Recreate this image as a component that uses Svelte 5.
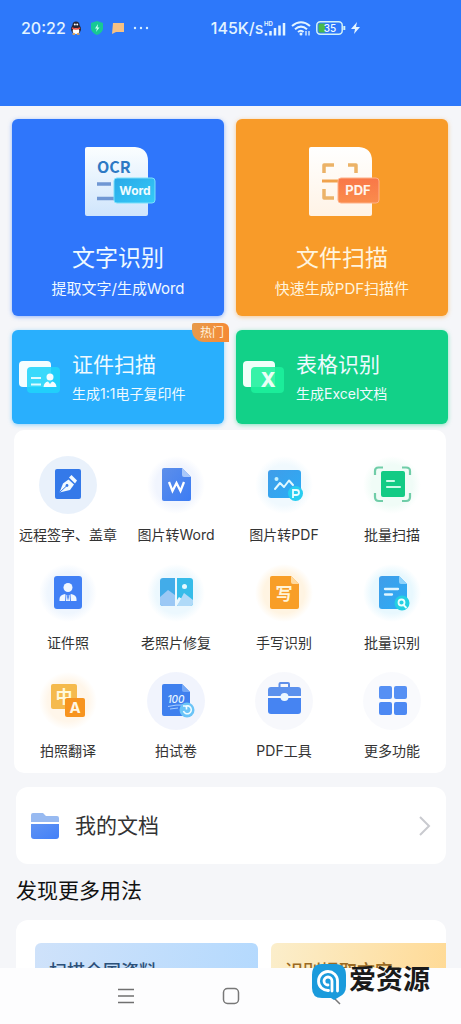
<script>
  const features = [
    { id: "sign", label: "远程签字、盖章", halo: "#e9f1fb", solid: true },
    { id: "word", label: "图片转Word", halo: "#f1f5fe" },
    { id: "pdf", label: "图片转PDF", halo: "#f0f9fe" },
    { id: "scan", label: "批量扫描", halo: "#f0fcf7" },
    { id: "portrait", label: "证件照", halo: "#eff6fe" },
    { id: "restore", label: "老照片修复", halo: "#ecf8fe" },
    { id: "handwriting", label: "手写识别", halo: "#fff4e2" },
    { id: "batch", label: "批量识别", halo: "#e8f8fe" },
    { id: "translate", label: "拍照翻译", halo: "#fff6ea" },
    { id: "exam", label: "拍试卷", halo: "#f1f4fd", solid: true },
    { id: "tools", label: "PDF工具", halo: "#f7f8fc", solid: true },
    { id: "more", label: "更多功能", halo: "#f9fafd", solid: true },
  ];

  const tips = [
    { label: "扫描全国资料", tone: "blue" },
    { label: "识别提取文字", tone: "gold" },
  ];
</script>

{#snippet featureIcon(id)}
  {#if id === "sign"}
    <rect x="17" y="14" width="26" height="30" rx="2" fill="#3479e9" />
    <path d="M21.500 37.500L25 28.500L30.500 24.500L36 29.500L32 35Z" fill="#f3fbff" />
    <path d="M31 22.500L33.500 20L39 25.500L37 28.500Z" fill="#f3fbff" />
    <path d="M21.500 37.500L28.500 31" stroke="#3479e9" stroke-width="1" />
    <circle cx="29" cy="30.500" r="1.400" fill="#3479e9" />
  {:else if id === "word"}
    <path d="M18 13H36L45 22V44Q45 46 43 46H18Q16 46 16 44V15Q16 13 18 13Z" fill="url(#blue)" />
    <path d="M36 13L45 22H38Q36 22 36 20Z" fill="#a9c8fa" />
    <path d="M23 27L26.500 36L30.500 28L34.500 36L38 27" fill="none" stroke="#fff" stroke-width="2.300" />
  {:else if id === "pdf"}
    <rect x="14" y="15" width="33" height="28" rx="3" fill="url(#sky)" />
    <circle cx="22.500" cy="24" r="2" fill="#c4f1ff" />
    <path d="M21 34L26 28L30 32L35 25.500L39 30" fill="none" stroke="#e1f8ff" stroke-width="2" stroke-linecap="round" stroke-linejoin="round" />
    <circle cx="41.500" cy="38.500" r="7.500" fill="#28cdf0" />
    <path d="M39 43V35H42.500Q45 35 45 37.500T42.500 40H39" fill="none" stroke="#e8fdff" stroke-width="1.800" />
  {:else if id === "scan"}
    <rect x="19" y="16" width="24" height="26" rx="2" fill="#13cb85" />
    <path d="M13 20V16Q13 12.500 16.500 12.500H21M40 12.500H44Q48 12.500 48 16V20M48 38V42Q48 46 44 46H40M21 46H17Q13 46 13 42V38" fill="none" stroke="#70cda8" stroke-width="2.200" />
    <path d="M25 26H32M25 32H38" stroke="#cdfbe9" stroke-width="2.200" stroke-linecap="round" />
  {:else if id === "portrait"}
    <rect x="16" y="13" width="28" height="33" rx="3" fill="#4180f5" />
    <circle cx="30" cy="24.500" r="4.500" fill="#f0f7ff" />
    <path d="M21.500 38V36Q21.500 32 27 31L30 33L33 31Q38.500 32 38.500 36V38Z" fill="#f0f7ff" />
    <path d="M28 31L27.500 38M32 31L32.500 38" stroke="#4180f5" stroke-width="0.900" />
    <path d="M30 32L31 33.500L30 38L29 33.500Z" fill="#4180f5" />
  {:else if id === "restore"}
    <path d="M17 15H29V43H17Q14 43 14 40V18Q14 15 17 15Z" fill="#42ace9" />
    <path d="M31 15H44Q47 15 47 18V40Q47 43 44 43H31Z" fill="#36bce9" />
    <path d="M14 34L22 27L29 32V43H17Q14 43 14 40Z" fill="#9bc8f5" />
    <path d="M31 37L33 34L36 36L31 43Z" fill="#e8f7ff" />
    <path d="M31 43L38 30L47 37V40Q47 43 44 43Z" fill="#b0daf8" />
    <circle cx="38.500" cy="23.500" r="2.500" fill="#e5f9ff" />
  {:else if id === "handwriting"}
    <path d="M18 13H37L45 21V44Q45 46 43 46H18Q16 46 16 44V15Q16 13 18 13Z" fill="#f89e27" />
    <path d="M37 13L45 21H39Q37 21 37 19Z" fill="#ffd99c" />
    <text x="30" y="37" font-size="17" font-weight="700" text-anchor="middle" fill="#fff4d9">写</text>
  {:else if id === "batch"}
    <path d="M20 13H37L45 21V44Q45 46 43 46H20Q17 46 17 43V16Q17 13 20 13Z" fill="url(#sky)" />
    <path d="M37 13L45 21H39Q37 21 37 19Z" fill="#8ed2fb" />
    <path d="M23 26H36M23 31.500H30" stroke="#e0f5ff" stroke-width="2.300" stroke-linecap="round" />
    <circle cx="40" cy="40" r="7.500" fill="#24d0e2" />
    <circle cx="39.500" cy="39.500" r="3" fill="none" stroke="#eaffff" stroke-width="1.800" />
    <path d="M41.500 42L44 44.500" stroke="#eaffff" stroke-width="1.800" stroke-linecap="round" />
  {:else if id === "translate"}
    <rect x="13" y="13" width="26" height="25" rx="2" fill="#f5ba4d" />
    <text x="26" y="32" font-size="17" font-weight="700" text-anchor="middle" fill="#fff8db">中</text>
    <rect x="27" y="27" width="20" height="19" rx="2" fill="#f7941f" />
    <text x="37" y="42" font-size="15" font-weight="700" text-anchor="middle" fill="#fff7e5">A</text>
  {:else if id === "exam"}
    <path d="M18 13H36L44 21V43Q44 45 42 45H18Q16 45 16 43V15Q16 13 18 13Z" fill="#3f80ee" />
    <path d="M36 13L44 21H38Q36 21 36 19Z" fill="#75a8f6" />
    <text x="30" y="32" font-size="10" font-style="italic" font-weight="500" text-anchor="middle" fill="#e7f5ff">100</text>
    <path d="M22 35.500Q30 33.500 38 34M24 38L32 37" fill="none" stroke="#a8ceff" stroke-width="1" />
    <circle cx="41" cy="39" r="7.500" fill="#6bc4f7" />
    <path d="M37.500 40A4 4 0 1 0 39 35.500M37 35H40.500V38.500" fill="none" stroke="#effcff" stroke-width="1.600" />
  {:else if id === "tools"}
    <path d="M25.500 17V13Q25.500 12 26.500 12H34Q35 12 35 13V17" fill="none" stroke="#5f8fe9" stroke-width="2" />
    <path d="M17 16H44Q47 16 47 19V25H14V19Q14 16 17 16Z" fill="#5c91ed" />
    <path d="M14 27H47V40Q47 43 44 43H17Q14 43 14 40Z" fill="#4684f2" />
    <circle cx="30.500" cy="26" r="4" fill="#eef8ff" />
  {:else}
    <rect x="17" y="15" width="13" height="13" rx="2" fill="#5690f4" />
    <rect x="32" y="15" width="13" height="13" rx="2" fill="#5690f4" />
    <rect x="17" y="31" width="13" height="13" rx="2" fill="#4d89f3" />
    <rect x="32" y="31" width="13" height="13" rx="2" fill="#4d89f3" />
  {/if}
{/snippet}

<!-- gradients shared by the icons -->
<svg class="defs" width="0" height="0" aria-hidden="true">
  <defs>
    <linearGradient id="blue" x2="1" y2="1">
      <stop stop-color="#5d8fea" />
      <stop offset="1" stop-color="#3c7cf4" />
    </linearGradient>
    <linearGradient id="sky" x2="1" y2="1">
      <stop stop-color="#409de9" />
      <stop offset="1" stop-color="#2bacf5" />
    </linearGradient>
    <linearGradient id="paper" x2="0" y2="1">
      <stop stop-color="#fbfeff" />
      <stop offset="1" stop-color="#cfe5fc" />
    </linearGradient>
    <linearGradient id="paperWarm" x2="0" y2="1">
      <stop stop-color="#ffffff" />
      <stop offset="1" stop-color="#fff3e6" />
    </linearGradient>
    <linearGradient id="tagBlue" x2="1" y2="1">
      <stop stop-color="#29a9e8" />
      <stop offset="1" stop-color="#35cbf8" />
    </linearGradient>
    <linearGradient id="tagRed" x2="0" y2="1">
      <stop stop-color="#f97748" />
      <stop offset="1" stop-color="#fa8c4c" />
    </linearGradient>
    <linearGradient id="folder" x2="1" y2="1">
      <stop stop-color="#5f93f3" />
      <stop offset="1" stop-color="#4380f8" />
    </linearGradient>
  </defs>
</svg>

<div class="app">
  <header class="top-bar">
    <div class="status">
      <span class="time">20:22</span>
      <svg width="12" height="14" viewBox="0 0 12 14" aria-hidden="true">
        <ellipse cx="6" cy="8" rx="5" ry="5" fill="#252638" />
        <circle cx="6" cy="4" r="3.500" fill="#252638" />
        <ellipse cx="6" cy="10" rx="3.300" ry="3" fill="#fff" />
        <path d="M2 7Q6 9 10 7" fill="none" stroke="#e94b3f" stroke-width="1.500" />
        <circle cx="4.800" cy="3.500" r="1" fill="#fff" />
        <circle cx="7.200" cy="3.500" r="1" fill="#fff" />
        <path d="M2.500 13H5M7 13H9.500" stroke="#f6a53a" stroke-width="1.500" />
      </svg>
      <svg width="12" height="14" viewBox="0 0 12 14" aria-hidden="true">
        <path d="M6 0L12 2V8Q11 12 6 14Q1 12 0 8V2Z" fill="#17c994" />
        <path d="M7 3L4 7.500H6L5 11L8.500 6.500H6.500Z" fill="#c9fff0" />
      </svg>
      <svg width="12" height="12" viewBox="0 0 12 12" aria-hidden="true">
        <path d="M1 1H12V10H4L0 12Z" fill="#f6c184" />
      </svg>
      <svg class="dots" width="16" height="4" viewBox="0 0 16 4" aria-hidden="true">
        <g fill="#d9f0ff"><circle cx="2" cy="2" r="1.200" /><circle cx="8" cy="2" r="1.200" /><circle cx="14" cy="2" r="1.200" /></g>
      </svg>
      <span class="speed">145K/s</span>
      <svg width="22" height="15" viewBox="0 0 22 15" aria-hidden="true">
        <text x="0" y="5" font-size="6" font-weight="700" fill="#e3f4ff">HD</text>
        <path d="M2 14.500V12M6.500 14.500V10M11 14.500V7M15.500 14.500V4.500M20 14.500V2" stroke="#e3f4ff" stroke-width="2.500" />
      </svg>
      <svg class="wifi" width="20" height="15" viewBox="0 0 20 15" aria-hidden="true">
        <path d="M1 5Q10 -2.500 19 5M4 8.300Q10 3 16 8.300M7 11Q10 8.500 12.500 11" fill="none" stroke="#e3f4ff" stroke-width="2" />
        <circle cx="10" cy="13" r="1.500" fill="#e3f4ff" />
        <path d="M15 10V14.500M18 10V14.500" stroke="#e3f4ff" stroke-width="1.300" />
      </svg>
      <svg width="30" height="14" viewBox="0 0 30 14" aria-hidden="true">
        <rect x="0.800" y="0.800" width="25.400" height="12.400" rx="3.500" fill="none" stroke="#d2f2f7" stroke-width="1.500" />
        <path d="M4 2.500H9V11.500H4Q2.500 11.500 2.500 10V4Q2.500 2.500 4 2.500Z" fill="#49b94c" />
        <text x="14" y="10.500" font-size="10" font-weight="500" text-anchor="middle" fill="#f0fbff">35</text>
        <path d="M28.300 5V9" stroke="#d2f2f7" stroke-width="2" />
      </svg>
      <svg width="9" height="12" viewBox="0 0 9 12" aria-hidden="true">
        <path d="M6 0L0 7H4L3 12L9 5H5Z" fill="#e3f4ff" />
      </svg>
    </div>
  </header>

  <main>
    <section class="cards">
      <a href="#ocr" class="card ocr">
        <svg width="76" height="70" viewBox="0 0 76 70" aria-hidden="true">
          <path d="M7 0H55Q68 1 68 14V67Q68 69 66 69H7Q5 69 5 67V2Q5 0 7 0Z" fill="url(#paper)" />
          <text class="condensed" x="17" y="26" font-size="16" font-weight="700" fill="#2d79c4">OCR</text>
          <path d="M17 37H31M17 51.500H36" stroke="#7097d3" stroke-width="3.500" />
          <rect x="34" y="31" width="41" height="25" rx="3" fill="url(#tagBlue)" stroke="#7de0fb" />
          <text x="55" y="48" font-size="12" font-weight="700" text-anchor="middle" fill="#effcff">Word</text>
        </svg>
        <strong>文字识别</strong>
        <span>提取文字/生成Word</span>
      </a>

      <a href="#scan-file" class="card file">
        <svg width="76" height="70" viewBox="0 0 76 70" aria-hidden="true">
          <path d="M7 0H55Q68 1 68 14V67Q68 69 66 69H7Q5 69 5 67V2Q5 0 7 0Z" fill="url(#paperWarm)" />
          <path d="M20 26V18H30M44 18H52V26M30 51H20V42" fill="none" stroke="#ecb267" stroke-width="3.500" stroke-linejoin="round" />
          <path d="M18 34H36" stroke="#f0a24d" stroke-width="3" />
          <rect x="34" y="31" width="41" height="25" rx="3" fill="url(#tagRed)" stroke="#ffb188" />
          <text x="54" y="48" font-size="13" font-weight="700" text-anchor="middle" fill="#fff5ec">PDF</text>
        </svg>
        <strong>文件扫描</strong>
        <span>快速生成PDF扫描件</span>
      </a>

      <a href="#scan-id" class="card small id">
        <svg width="41" height="34" viewBox="0 0 41 34" aria-hidden="true">
          <rect x="0" y="1" width="32" height="26" rx="4" fill="#f4fdff" />
          <rect x="8" y="7" width="33" height="26" rx="4" fill="#20d4fb" fill-opacity="0.880" />
          <path d="M12 18H22M12 24.500H22" stroke="#dffbff" stroke-width="2" />
          <circle cx="31" cy="17" r="3.500" fill="#f4fdff" />
          <path d="M24.500 27Q25 22 29 21.500L31 24L33 21.500Q37 22 37.500 27Z" fill="#f4fdff" />
        </svg>
        <div>
          <strong>证件扫描</strong>
          <span>生成1:1电子复印件</span>
        </div>
        <em class="badge">热门</em>
      </a>

      <a href="#table" class="card small table">
        <svg width="41" height="34" viewBox="0 0 41 34" aria-hidden="true">
          <rect x="0" y="1" width="32" height="26" rx="4" fill="#f1fff9" />
          <rect x="8" y="7" width="33" height="26" rx="4" fill="#1df09c" fill-opacity="0.880" />
          <text x="25" y="27" font-size="20" font-weight="800" text-anchor="middle" fill="#e9fff6">X</text>
        </svg>
        <div>
          <strong>表格识别</strong>
          <span>生成Excel文档</span>
        </div>
      </a>
    </section>

    <nav class="features" aria-label="功能">
      {#each features as item}
        <a href="#{item.id}">
          <svg width="60" height="60" viewBox="0 0 60 60" aria-hidden="true">
            <radialGradient id="halo-{item.id}">
              <stop stop-color={item.halo} />
              <stop offset="0.700" stop-color={item.halo} />
              <stop offset="1" stop-color={item.solid ? item.halo : "#ffffff"} />
            </radialGradient>
            <circle cx="30" cy="30" r="29" fill="url(#halo-{item.id})" />
            {@render featureIcon(item.id)}
          </svg>
          <span>{item.label}</span>
        </a>
      {/each}
    </nav>

    <a href="#documents" class="documents">
      <svg width="29" height="26" viewBox="0 0 29 26" aria-hidden="true">
        <path d="M2 0H12L15 3H26Q28 3 28 5V9H0V2Q0 0 2 0Z" fill="#98baf1" />
        <path d="M0 11H28V23Q28 26 25 26H3Q0 26 0 23Z" fill="url(#folder)" />
      </svg>
      <span>我的文档</span>
      <svg width="12" height="20" viewBox="0 0 12 20" aria-hidden="true">
        <path d="M1 1L10 10L1 19" fill="none" stroke="#c9cacf" stroke-width="2" />
      </svg>
    </a>

    <h2>发现更多用法</h2>

    <section class="tips">
      {#each tips as tip}
        <a href="#tips" class="tip {tip.tone}">{tip.label}</a>
      {/each}
    </section>
  </main>

  <footer class="system-nav">
    <button type="button" aria-label="菜单">
      <svg width="20" height="20" viewBox="0 0 20 20">
        <path d="M2 3.500H18M2 10H18M2 16.500H18" stroke="#707070" stroke-width="1.400" />
      </svg>
    </button>
    <button type="button" aria-label="主页">
      <svg width="20" height="20" viewBox="0 0 20 20">
        <rect x="2.500" y="2.500" width="15" height="15" rx="4" fill="none" stroke="#777" stroke-width="1.500" />
      </svg>
    </button>
    <button type="button" aria-label="返回">
      <svg width="20" height="20" viewBox="0 0 20 20">
        <path d="M14 2L6 10L14 18" fill="none" stroke="#777" stroke-width="1.500" />
      </svg>
    </button>

    <div class="watermark">
      <svg width="36" height="36" viewBox="0 0 36 36" aria-hidden="true">
        <path d="M11 0H24Q35 0 35 11V22Q35 30 28 33L23 36L20 34H11Q1 34 1 24V11Q1 0 11 0Z" fill="#1b9bdc" />
        <path d="M26.500 27V17A9.500 9.500 0 1 0 17.500 26.500" fill="none" stroke="#fff" stroke-width="2.800" stroke-linecap="round" />
        <path d="M21 27V17A4 4 0 1 0 17 21" fill="none" stroke="#fff" stroke-width="2.800" stroke-linecap="round" />
      </svg>
      <span>爱资源</span>
    </div>
  </footer>
</div>

<style>
  :global(body) {
    margin: 0;
    background: #f5f6f9;
    font-family: Inter, "Noto Sans CJK SC", sans-serif;
    color: #333333;
  }

  a {
    color: inherit;
    text-decoration: none;
  }

  svg {
    display: block;
    flex: none;
  }

  .defs {
    position: absolute;
  }

  .condensed {
    font-family: "Noto Sans CJK SC", sans-serif;
  }

  .app {
    height: 100dvh;
    display: flex;
    flex-direction: column;
  }

  .top-bar {
    flex: none;
    box-sizing: border-box;
    height: 106px;
    padding: 16px 21px;
    background: #2d78fa;
  }

  .status {
    display: flex;
    align-items: center;
    height: 24px;
    color: #e3f4ff;
    font-size: 16px;
    font-weight: 500;
  }

  .time {
    margin-right: 4px;
  }

  .status svg + svg {
    margin-left: 9px;
  }

  .status .dots + .speed {
    margin-left: 62px;
  }

  .status .speed + svg {
    margin-left: 1px;
  }

  .status .wifi,
  .status .wifi ~ svg {
    margin-left: 5px;
  }

  main {
    flex: 1;
    min-height: 0;
    overflow-y: auto;
    scrollbar-width: none;
  }

  .cards {
    display: grid;
    grid-template-columns: 1fr 1fr;
    gap: 14px 12px;
    padding: 13px 13px 6px 12px;
  }

  .card {
    position: relative;
    display: flex;
    flex-direction: column;
    align-items: center;
    padding: 28px 0 16px;
    border-radius: 6px;
    color: #effaff;
  }

  .card strong {
    margin-top: 26px;
    font-size: 23px;
    font-weight: 400;
    line-height: 30px;
  }

  .card span {
    margin-top: 5px;
    font-size: 15px;
    line-height: 22px;
  }

  .ocr {
    background: #2f76fb;
    box-shadow: 0 1px 4px rgba(47, 118, 251, 0.5);
  }

  .file {
    background: #f89b29;
    box-shadow: 0 1px 4px rgba(248, 155, 41, 0.5);
    color: #fff4de;
  }

  .small {
    flex-direction: row;
    gap: 12px;
    padding: 20px 0 20px 7px;
  }

  .small div {
    display: flex;
    flex-direction: column;
  }

  .small strong {
    margin-top: 0;
    font-size: 21px;
  }

  .small span {
    margin-top: 4px;
    font-size: 14px;
    line-height: 20px;
  }

  .id {
    background: #29affd;
    box-shadow: 0 1px 4px rgba(41, 175, 253, 0.5);
  }

  .table {
    background: #12d188;
    box-shadow: 0 1px 4px rgba(18, 209, 136, 0.5);
  }

  .badge {
    position: absolute;
    top: -7px;
    right: -5px;
    padding: 0 5px 0 8px;
    border-radius: 2px 6px 0 12px;
    background: linear-gradient(90deg, #e79a4b, #f58a35);
    color: #fff0dc;
    font-size: 12px;
    font-style: normal;
    line-height: 19px;
  }

  .features {
    display: grid;
    grid-template-columns: repeat(4, 1fr);
    row-gap: 18px;
    margin: 0 15px 14px 14px;
    padding: 25px 0 12px;
    border-radius: 10px;
    background: #ffffff;
  }

  .features a {
    display: flex;
    flex-direction: column;
    align-items: center;
    gap: 10px;
    font-size: 14px;
    line-height: 20px;
    white-space: nowrap;
  }

  .documents {
    display: flex;
    align-items: center;
    gap: 15px;
    margin: 0 15px 13px 16px;
    padding: 24px 15px;
    border-radius: 12px;
    background: #ffffff;
    font-size: 21px;
    line-height: 29px;
  }

  .documents span {
    flex: 1;
  }

  h2 {
    margin: 0 16px 15px;
    color: #111111;
    font-size: 21px;
    font-weight: 400;
    line-height: 28px;
  }

  .tips {
    display: flex;
    gap: 13px;
    margin: 0 15px 0 16px;
    padding: 23px 0 23px 19px;
    border-radius: 12px;
    background: #ffffff;
    overflow: hidden;
  }

  .tip {
    flex: none;
    box-sizing: border-box;
    width: 223px;
    height: 100px;
    padding: 15px 14px;
    border-radius: 6px;
    font-size: 18px;
    font-weight: 500;
    line-height: 28px;
  }

  .blue {
    background: linear-gradient(100deg, #cfe2fa, #b3d9fe);
    color: #2c5078;
  }

  .gold {
    background: linear-gradient(100deg, #fbeecb, #ffd993 80%);
    color: #9b6a22;
  }

  .system-nav {
    position: relative;
    flex: none;
    display: flex;
    justify-content: center;
    gap: 85px;
    padding: 18px 0;
    background: #fdfdfe;
  }

  .system-nav button {
    padding: 0;
    border: none;
    background: transparent;
    cursor: pointer;
  }

  .watermark {
    position: absolute;
    top: -4px;
    right: 31px;
    display: flex;
    gap: 2px;
    color: #1a1a1a;
    font-size: 27px;
    font-weight: 700;
    line-height: 32px;
    pointer-events: none;
  }
</style>
